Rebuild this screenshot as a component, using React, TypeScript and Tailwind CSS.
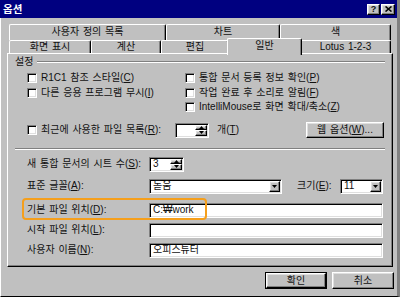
import React from 'react'

const raised =
  'border border-t-white border-l-white border-r-black border-b-black shadow-[inset_-1px_-1px_0_#808080,inset_1px_1px_0_#dfdfdf] bg-[#c0c0c0]'
const sunken =
  'border border-t-[#808080] border-l-[#808080] border-r-white border-b-white shadow-[inset_1px_1px_0_#000,inset_-1px_-1px_0_#dfdfdf] bg-white'

function M({ c }: { c: string }) {
  return <span className="underline underline-offset-[1px]">{c}</span>
}

function Check({ children }: { children: React.ReactNode }) {
  return (
    <div className="flex items-center gap-[4px] h-[14.5px]">
      <div className={`w-[10px] h-[10px] shrink-0 ${sunken}`} />
      <span className="whitespace-nowrap">{children}</span>
    </div>
  )
}

function Down() {
  return (
    <svg width="5" height="3" viewBox="0 0 5 3">
      <path d="M0 0h5L2.5 3z" fill="#000" />
    </svg>
  )
}

function Up() {
  return (
    <svg width="5" height="3" viewBox="0 0 5 3">
      <path d="M0 3h5L2.5 0z" fill="#000" />
    </svg>
  )
}

function Spinner({ value, width }: { value: string; width: string }) {
  return (
    <div className={`${width} h-[15px] flex ${sunken} p-[1px]`}>
      <div className="flex-1 flex items-center pl-[2px]">{value}</div>
      <div className="w-[12px] flex flex-col">
        <div className={`flex-1 flex items-center justify-center ${raised}`}>
          <Up />
        </div>
        <div className={`flex-1 flex items-center justify-center ${raised}`}>
          <Down />
        </div>
      </div>
    </div>
  )
}

function Select({ value, width }: { value: string; width: string }) {
  return (
    <div className={`${width} h-[15px] flex ${sunken} p-[1px]`}>
      <div className="flex-1 flex items-center pl-[2px]">{value}</div>
      <div className={`w-[11px] flex items-center justify-center ${raised}`}>
        <Down />
      </div>
    </div>
  )
}

function Field({ value }: { value?: string }) {
  return (
    <div className={`flex-1 h-[15px] flex items-center pl-[3px] ${sunken}`}>{value}</div>
  )
}

const row1 = [
  { label: '사용자 정의 목록', w: 'w-[157px]' },
  { label: '차트', w: 'w-[114px]' },
  { label: '색', w: 'w-[111px]' },
]

const row2 = [
  { label: '화면 표시', w: 'w-[82px]' },
  { label: '계산', w: 'w-[70px]' },
  { label: '편집', w: 'w-[68px]' },
  { label: '일반', w: 'w-[75px]', active: true },
  { label: 'Lotus 1-2-3', w: 'w-[91px]' },
]

const tab =
  'flex items-center justify-center border-t border-l border-r border-t-white border-l-white border-r-black shadow-[inset_-1px_0_0_#808080] rounded-t-[2px] bg-[#c0c0c0]'

export default function App() {
  return (
    <div className="w-[400px] h-[297px] bg-[#c0c0c0] flex flex-col border-l border-l-white border-r-[3px] border-r-[#808080] border-b border-b-black text-[10px] leading-none text-[#111] [word-spacing:1px] font-['Liberation_Sans','Noto_Sans_CJK_KR',sans-serif]">
      {/* Title bar */}
      <div className="h-[18px] -ml-px bg-[#000080] flex items-center pl-[3px] pr-[2px]">
        <span className="text-white font-bold text-[10.5px]">옵션</span>
        <div className="ml-auto flex gap-[1px]">
          <div className={`w-[13px] h-[11px] flex items-center justify-center text-[9px] font-bold ${raised}`}>?</div>
          <div className={`w-[14px] h-[11px] flex items-center justify-center ${raised}`}>
            <svg width="7" height="6" viewBox="0 0 7 6">
              <path d="M0.5 0.5L6.5 5.5M6.5 0.5L0.5 5.5" stroke="#000" strokeWidth="1.6" />
            </svg>
          </div>
        </div>
      </div>

      {/* Tabs */}
      <div className="mt-[6px] pl-[8px]">
        <div className="flex h-[16px]">
          {row1.map((t) => (
            <div key={t.label} className={`${t.w} ${tab} pb-[2px]`}>
              {t.label}
            </div>
          ))}
        </div>
        <div className="flex items-end h-[13px]">
          {row2.map((t) =>
            t.active ? (
              <div key={t.label} className={`${t.w} h-[17px] -mx-[2px] -mb-[2px] relative z-10 ${tab} pb-[2px]`}>
                {t.label}
              </div>
            ) : (
              <div key={t.label} className={`${t.w} h-[13px] ${tab}`}>
                {t.label}
              </div>
            )
          )}
        </div>
      </div>

      {/* Panel */}
      <div className="ml-[6px] w-[386px] h-[214px] border border-t-white border-l-white border-r-black border-b-black shadow-[inset_-1px_-1px_0_#808080] pt-[2px] px-[7px]">
        <div className="flex items-center h-[12px]">
          <span className="mr-[4px]">설정</span>
          <div className="flex-1 border-t border-t-[#808080] border-b border-b-white" />
        </div>

        <div className="mt-[3px] pl-[12px] grid grid-cols-[158px_1fr]">
          <div>
            <Check>
              R1C1 참조 스타일(<M c="C" />)
            </Check>
            <Check>
              다른 응용 프로그램 무시(<M c="I" />)
            </Check>
          </div>
          <div>
            <Check>
              통합 문서 등록 정보 확인(<M c="P" />)
            </Check>
            <Check>
              작업 완료 후 소리로 알림(<M c="F" />)
            </Check>
            <Check>
              IntelliMouse로 화면 확대/축소(<M c="Z" />)
            </Check>
          </div>
        </div>

        <div className="mt-[7.5px] pl-[12px] pr-[1px] flex items-center h-[16px]">
          <div className="flex items-center gap-[4px] w-[148px]">
            <div className={`w-[10px] h-[10px] shrink-0 ${sunken}`} />
            <span className="whitespace-nowrap">
              최근에 사용한 파일 목록(<M c="R" />):
            </span>
          </div>
          <Spinner value="" width="w-[34px]" />
          <span className="ml-[8px]">
            개(<M c="T" />)
          </span>
          <div className={`ml-auto w-[78px] h-[16px] flex items-center justify-center ${raised}`}>
            웹 옵션(<M c="W" />)...
          </div>
        </div>

        <div className="mt-[10px] border-t border-t-[#808080] border-b border-b-white" />

        <div className="pl-[12px] pr-[2px]">
          <div className="mt-[6.5px] flex items-center h-[15px]">
            <span className="w-[122px]">
              새 통합 문서의 시트 수(<M c="S" />):
            </span>
            <Spinner value="3" width="w-[35px]" />
          </div>

          <div className="mt-[7px] flex items-center h-[15px]">
            <span className="w-[122px]">
              표준 글꼴(<M c="A" />):
            </span>
            <Select value="돋움" width="w-[133px]" />
            <span className="ml-[15px] w-[43px]">
              크기(<M c="E" />):
            </span>
            <Select value="11" width="w-[43px]" />
          </div>

          <div className="mt-[9px] flex items-center h-[15px] relative">
            <div className="absolute -left-[5px] -top-[5px] w-[185px] h-[22px] border-2 border-[#f59f1c] rounded-[4px]" />
            <span className="w-[122px]">
              기본 파일 위치(<M c="D" />):
            </span>
            <Field value="C:₩work" />
          </div>

          <div className="mt-[5px] flex items-center h-[15px]">
            <span className="w-[122px]">
              시작 파일 위치(<M c="L" />):
            </span>
            <Field />
          </div>

          <div className="mt-[5px] flex items-center h-[15px]">
            <span className="w-[122px]">
              사용자 이름(<M c="N" />):
            </span>
            <Field value="오피스튜터" />
          </div>
        </div>
      </div>

      {/* Buttons */}
      <div className="mt-[5px] flex justify-end gap-[5px] pr-[3px]">
        <div className="border border-black">
          <div className={`w-[60px] h-[15px] flex items-center justify-center ${raised}`}>확인</div>
        </div>
        <div className={`w-[62px] h-[17px] flex items-center justify-center ${raised}`}>취소</div>
      </div>
    </div>
  )
}
